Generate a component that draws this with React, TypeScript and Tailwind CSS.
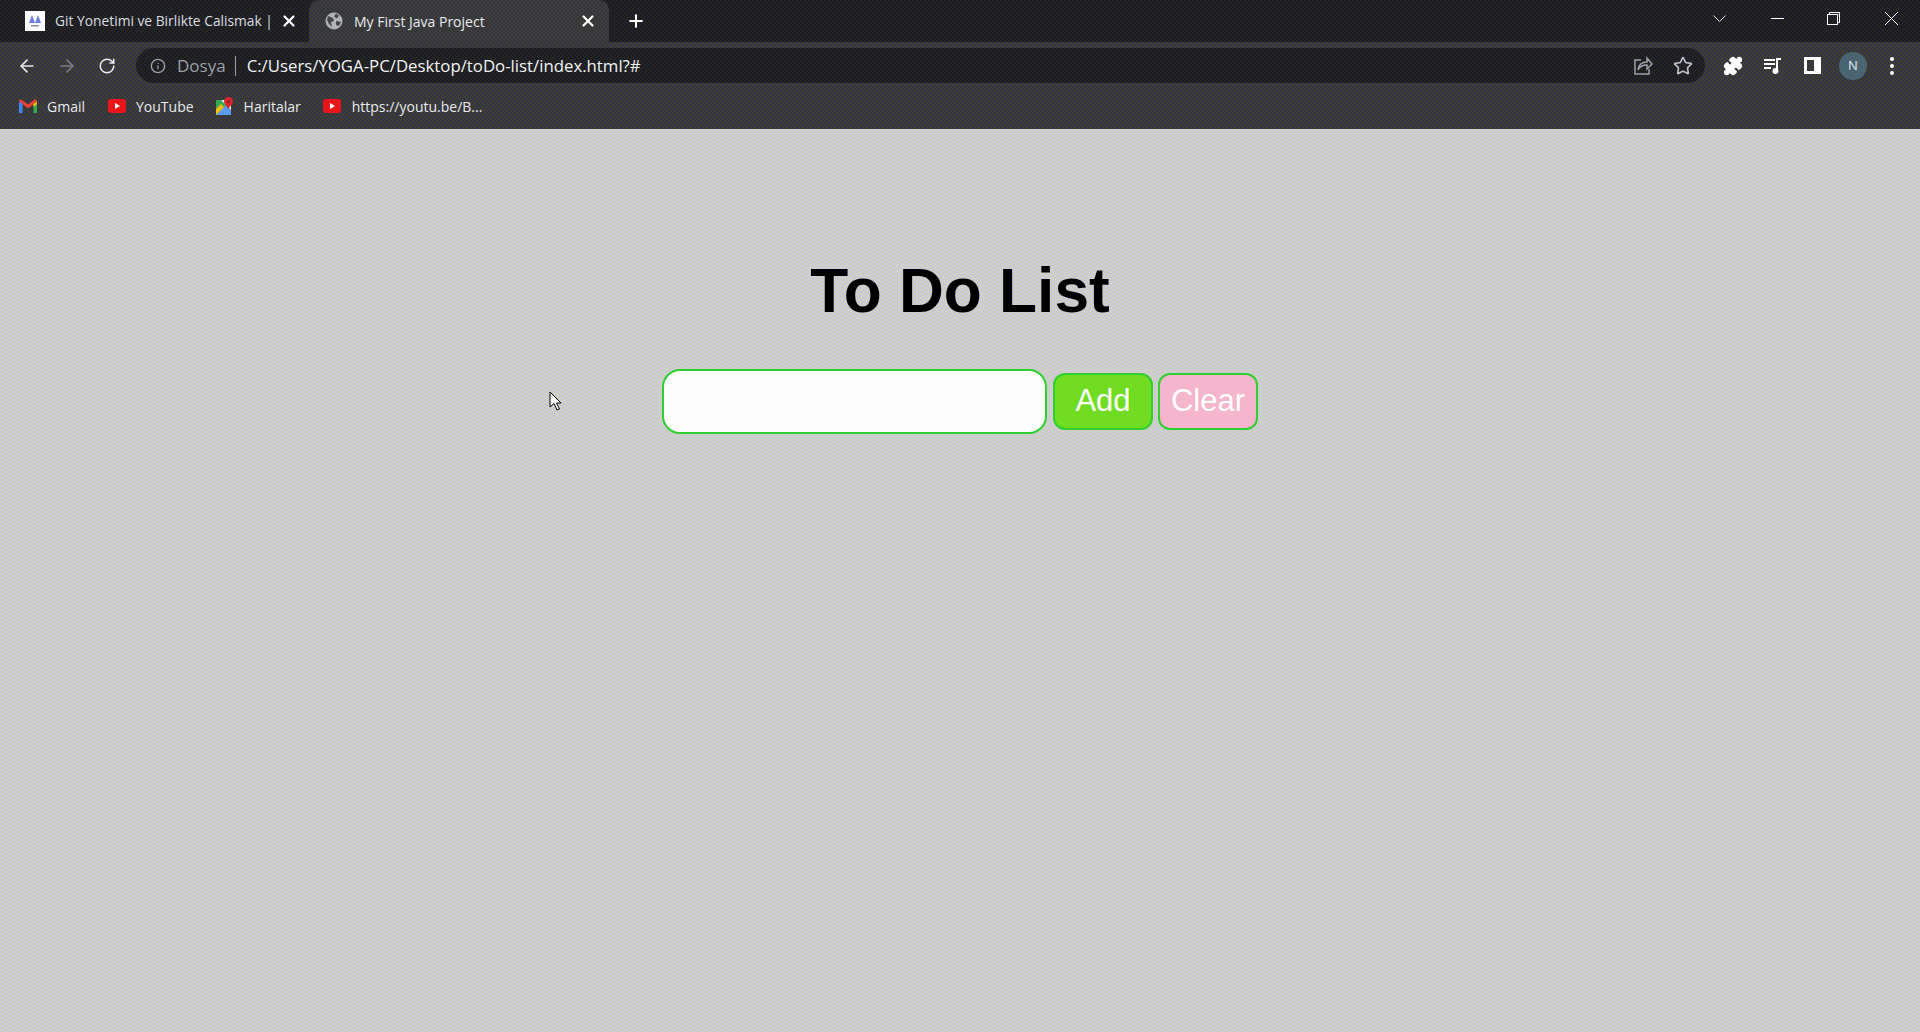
import { ArrowLeft, ArrowRight, RotateCw, Info, Star, Puzzle, X, Plus } from 'lucide-react';

function YoutubeIcon() {
  return (
    <svg className="w-[18px] h-[14px]" viewBox="0 0 18 14">
      <rect x="0" y="0" width="18" height="14" rx="3" fill="#e8161b" />
      <path d="M7 4l5 3-5 3z" fill="#fff" />
    </svg>
  );
}

function GmailIcon() {
  return (
    <svg className="w-[18px] h-[14px]" viewBox="0 0 18 14">
      <path d="M0 2.500C0 .8 1.600 0 3 1l6 4.500L15 1c1.400-1 3-.2 3 1.500L9 9.500z" fill="#ea4335" />
      <path d="M0 2.500V14h3.500V5z" fill="#4285f4" />
      <path d="M18 2.500V14h-3.500V5z" fill="#34a853" />
      <path d="M14.500 5L18 2.500V5l-3.500 3z" fill="#fbbc04" />
    </svg>
  );
}

function MapsIcon() {
  return (
    <svg className="w-[18px] h-[18px]" viewBox="0 0 18 18">
      <rect x="0" y="3" width="15" height="15" fill="#34a853" />
      <path d="M0 18L10 8l5 5v5z" fill="#5b9bf0" />
      <path d="M0 18L8 10l-3-3-5 5z" fill="#fbbc04" />
      <path d="M5 3l10 10V8L10 3z" fill="#e8eaed" />
      <path d="M12.500 0a4.500 4.500 0 0 1 4.500 4.500c0 2.500-2.800 4-4.500 7.500C10.800 8.500 8 7 8 4.500A4.500 4.500 0 0 1 12.500 0z" fill="#d8252c" />
      <circle cx="12.500" cy="4.500" r="1.500" fill="#8c1c13" />
    </svg>
  );
}

function Tabs() {
  return (
    <div className="flex h-[42px] bg-[repeating-conic-gradient(#1b1b2e_0_25%,#25251a_0_50%)] bg-[length:4px_4px] pl-2 items-end">
      <div className="flex items-center w-[301px] h-[42px] pl-[17px] pr-[11px]">
        <div className="w-[20px] h-[20px] bg-white flex items-center justify-center shrink-0">
          <svg className="w-[16px] h-[16px]" viewBox="0 0 16 16">
            <path d="M5 2l3 8H2zM11 2l3 8H8z" fill="#6f7fe0" />
            <rect x="4" y="12" width="8" height="1.500" fill="#8a8a9a" />
          </svg>
        </div>
        <span className="ml-[10px] text-[13.800px] text-[#dadce0] whitespace-nowrap flex-1">Git Yonetimi ve Birlikte Calismak |</span>
        <X className="w-[18px] h-[18px] ml-[6px] text-white shrink-0" strokeWidth={3} />
      </div>
      <div className="flex items-center w-[300px] h-[42px] bg-[repeating-conic-gradient(#33334a_0_25%,#3f3f2e_0_50%)] bg-[length:4px_4px] rounded-t-[10px] pl-4 pr-[12px]">
        <svg className="w-[18px] h-[18px] shrink-0" viewBox="0 0 18 18">
          <circle cx="9" cy="9" r="8.500" fill="#b0b3b6" />
          <path d="M3 4l5 2 1 3-3 1 1 5-3-3-2-4zM11 1.500l3 2-2 3-3-2zM11 9l5 1-2 4-3-1z" fill="#45464a" />
        </svg>
        <span className="ml-[11px] text-[14px] text-[#e8eaed] whitespace-nowrap flex-1">My First Java Project</span>
        <X className="w-[18px] h-[18px] text-white shrink-0" strokeWidth={3} />
      </div>
      <div className="h-[42px] ml-[17px] flex items-center">
        <Plus className="w-[20px] h-[20px] text-white" strokeWidth={2.500} />
      </div>
      <div className="flex-1" />
      <div className="flex items-center h-[36px] self-start text-white mr-[22px]">
        <svg className="w-[13px] h-[7px] text-[#dadce0]" viewBox="0 0 13 7" fill="none" stroke="currentColor">
          <path d="M0.500 0.500l6 6 6-6" />
        </svg>
        <svg className="w-[13px] h-[1px] ml-[45px]" viewBox="0 0 13 1" stroke="#fff">
          <path d="M0 .5h13" />
        </svg>
        <svg className="w-[13px] h-[13px] ml-[43px]" viewBox="0 0 13 13" fill="none" stroke="#fff">
          <rect x="0.500" y="2.500" width="10" height="10" />
          <path d="M2.500 2.500V.5h10v10h-2" />
        </svg>
        <svg className="w-[13px] h-[13px] ml-[45px]" viewBox="0 0 13 13" fill="none" stroke="#fff">
          <path d="M0 0l13 13M13 0L0 13" />
        </svg>
      </div>
    </div>
  );
}

function Toolbar() {
  return (
    <div className="flex items-center h-[47px] pl-[17px] pr-[26px]">
      <ArrowLeft className="w-[20px] h-[20px] text-[#e8eaed]" strokeWidth={2} />
      <ArrowRight className="w-[20px] h-[20px] ml-[20px] text-[#7b7d80]" strokeWidth={2} />
      <RotateCw className="w-[18px] h-[18px] ml-[21px] text-[#e8eaed]" strokeWidth={2} />
      <div className="flex items-center flex-1 h-[35px] ml-[20px] bg-[repeating-conic-gradient(#1b1b2e_0_25%,#25251a_0_50%)] bg-[length:4px_4px] rounded-full pl-[14px] pr-[12px]">
        <Info className="w-[16px] h-[16px] text-[#9aa0a6]" strokeWidth={2} />
        <span className="ml-[11px] text-[#9aa0a6] text-[17px]">Dosya</span>
        <span className="ml-[9px] w-px h-[20px] bg-[#9aa0a6]" />
        <span className="ml-[11px] text-[#f1f3f4] text-[16.800px] whitespace-nowrap">C:/Users/YOGA-PC/Desktop/toDo-list/index.html?#</span>
        <div className="flex-1" />
        <svg className="w-[20px] h-[20px] text-[#9aa0a6]" viewBox="0 0 20 20" fill="none" stroke="currentColor" strokeWidth="1.500">
          <path d="M8 4H2v14h14v-5" />
          <path d="M5 14c0-5 4-8 9-8V2l5 6-5 5V9c-4 0-7 1-9 5z" />
        </svg>
        <Star className="w-[20px] h-[20px] ml-[20px] text-[#bdc1c6]" strokeWidth={2} />
      </div>
      <Puzzle className="w-[20px] h-[20px] ml-[18px] text-white" fill="#fff" strokeWidth={2} />
      <svg className="w-[20px] h-[20px] ml-[20px]" viewBox="0 0 20 20" fill="none" stroke="#fff" strokeWidth="2">
        <path d="M1 4h11M1 8h11M1 12h7" />
        <path d="M14 15V3h4" />
        <circle cx="12.500" cy="15" r="2" fill="#fff" />
      </svg>
      <svg className="w-[17px] h-[17px] ml-[21px]" viewBox="0 0 17 17">
        <path fillRule="evenodd" d="M0 0h17v17H0zM3 3v11h7V3z" fill="#fff" />
      </svg>
      <div className="w-[28px] h-[28px] ml-[18px] rounded-full bg-[#4a6572] flex items-center justify-center text-[13px] text-[#e8eaed]">N</div>
      <div className="flex flex-col gap-[3px] ml-[23px]">
        <span className="w-1 h-1 rounded-full bg-white" />
        <span className="w-1 h-1 rounded-full bg-white" />
        <span className="w-1 h-1 rounded-full bg-white" />
      </div>
    </div>
  );
}

function Bookmarks() {
  return (
    <div className="flex items-center h-[40px] pb-[6px] pl-[19px] text-[14px] text-[#e8eaed]">
      <GmailIcon />
      <span className="ml-[10px]">Gmail</span>
      <div className="ml-[23px]"><YoutubeIcon /></div>
      <span className="ml-[10px]">YouTube</span>
      <div className="ml-[22px]"><MapsIcon /></div>
      <span className="ml-[10px]">Haritalar</span>
      <div className="ml-[22px]"><YoutubeIcon /></div>
      <span className="ml-[11px]">https://youtu.be/B...</span>
    </div>
  );
}

export default function App() {
  return (
    <div className="relative w-[1920px] h-[1032px] overflow-hidden flex flex-col font-['Liberation_Sans',Arial,sans-serif]">
      <header className="shrink-0 font-['Open_Sans','Liberation_Sans',sans-serif] bg-[repeating-conic-gradient(#33334a_0_25%,#3f3f2e_0_50%)] bg-[length:4px_4px]">
        <Tabs />
        <Toolbar />
        <Bookmarks />
      </header>
      <main className="flex-1 flex flex-col items-center bg-[repeating-conic-gradient(#c7c7e2_0_25%,#d3d3b8_0_50%)] bg-[length:4px_4px]">
        <h1 className="mt-[126px] text-[62.200px] leading-[72px] font-bold text-black">To Do List</h1>
        <div className="mt-[42px] flex items-center">
          <input className="w-[385px] h-[65px] bg-[#fdfdfd] border-2 border-[#2fcf2f] rounded-[18px] outline-none" />
          <button className="ml-[6px] w-[100px] h-[57px] bg-[#70dd22] border-2 border-[#2fcf2f] rounded-[12px] text-[31px] text-white">Add</button>
          <button className="ml-[5px] w-[100px] h-[57px] bg-[#f5b5cc] border-2 border-[#2fcf2f] rounded-[12px] text-[31px] text-white">Clear</button>
        </div>
      </main>
      <svg className="absolute left-[549px] top-[391px] w-[14px] h-[20px]" viewBox="0 0 14 20">
        <path d="M1 1v15l4-3.500L8 19l2.500-1-3-6H12z" fill="#fff" stroke="#000" strokeWidth="1" />
      </svg>
    </div>
  );
}
